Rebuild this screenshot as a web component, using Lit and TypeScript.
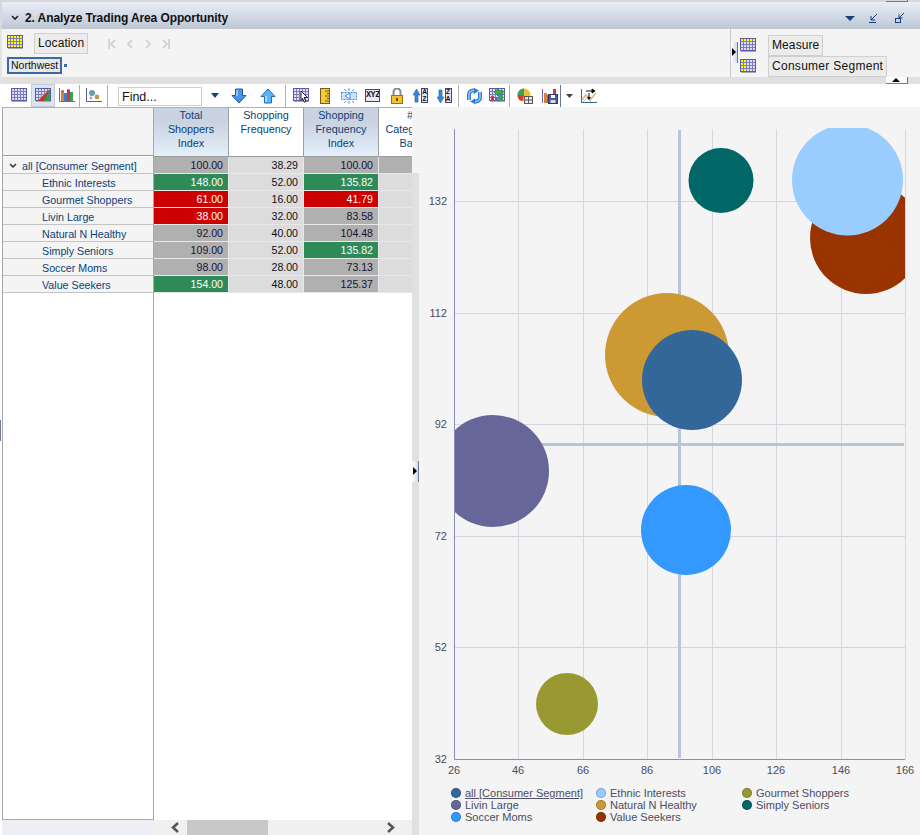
import { LitElement, html, css, svg } from "lit";
import { customElement } from "lit/decorators.js";

const grid = (mode: string) => svg`
  <rect x=".5" y=".5" width="15" height="12" fill="#dedff4" stroke="#5a5aa0"/>
  ${mode === "all" ? svg`<rect x="1" y="1" width="14" height="11" fill="#ffff00"/>` : ""}
  ${mode === "top" ? svg`<rect x="1" y="1" width="14" height="3" fill="#ffff00"/>` : ""}
  ${mode === "left" ? svg`<rect x="1" y="1" width="5" height="11" fill="#ffff00"/>` : ""}
  <path d="M3.500 1v11M6.500 1v11M9.500 1v11M12.500 1v11M1 3.500h14M1 6.500h14M1 9.500h14" stroke="#7c7cbc" fill="none"/>
  <path d="M1 13.500h15" stroke="#aaa"/>`;

const icons: Record<string, unknown> = {
  table: grid("none"),
  tablechart: svg`${grid("none")}<path d="M3 13L15 1v12z" fill="#2e9e4f"/><path d="M3 13L15 1 9 13z" fill="#c8342c"/>`,
  bars: svg`<path d="M.5 0v13.500H16" stroke="#6a6a9a" fill="none"/><rect x="2" y="3" width="3" height="10" fill="#d8803c"/><rect x="5" y="5" width="3" height="8" fill="#4a78c8"/><rect x="8" y="2" width="3" height="11" fill="#c83c3c"/><rect x="11" y="4" width="3" height="9" fill="#3ca05a"/><path d="M2 3h3M8 2h3" stroke="#8a3030"/>`,
  scatter: svg`<path d="M.5 0v13.500H16" stroke="#5a5a9a" fill="none"/><circle cx="6" cy="5" r="3" fill="#6f9aa8"/><circle cx="11" cy="9" r="2.400" fill="#b8a040"/><circle cx="5" cy="10" r="1.400" fill="#9aa8c0"/>`,
  down: svg`<path d="M4.500 1h7v6.500h3.500L8 15 1 7.500h3.500z" fill="#4a94e4" stroke="#1c5ca8"/><path d="M6 2v6" stroke="#a8d0f4" stroke-width="1.500"/>`,
  up: svg`<path d="M4.500 15h7V8.500H15L8 1 1 8.500h3.500z" fill="#5cb4f4" stroke="#1c6cb8"/><path d="M6 14V8" stroke="#c4e4fa" stroke-width="1.500"/>`,
  gridcursor: svg`${grid("none")}<path d="M8 3l6.500 6.500H11l2 4-1.500.8-2-4L8 12z" fill="#fff" stroke="#222"/>`,
  ruler: svg`<rect x="3.500" y=".5" width="9" height="15" fill="#f4c83c" stroke="#7a5a10"/><path d="M8 3h4M10 5.500h2M8 8h4M10 10.500h2M8 13h4" stroke="#7a5a10"/>`,
  swap: svg`<path d="M3 1l2 2M8 0v3M13 1l-2 2M3 15l2-2M8 16v-3M13 15l-2-2" stroke="#5aa0e0"/><rect x=".5" y="4.500" width="15" height="7" fill="#cfe4f8" stroke="#4a88d0" stroke-dasharray="2 1"/><path d="M4 8l5-3v6z" fill="#fff" stroke="#4a88d0"/>`,
  lock: svg`<path d="M4.500 7V4a3.500 3.500 0 0 1 7 0v3" fill="none" stroke="#8a8a8a" stroke-width="2"/><rect x="2.500" y="7.500" width="11" height="8" fill="#f4c030" stroke="#a07010"/><path d="M8 10v3" stroke="#7a4a00" stroke-width="2"/>`,
  refresh: svg`<path d="M3 12V6.500a4 4 0 0 1 4-4h2" fill="none" stroke="#2f7cd0" stroke-width="4"/><path d="M3 12V6.500a4 4 0 0 1 4-4h2" fill="none" stroke="#9ccbf2" stroke-width="1.500"/><path d="M8 0l5 2.500L8 6z" fill="#2f7cd0"/><path d="M14 4v5.500a4 4 0 0 1-4 4H8" fill="none" stroke="#2f7cd0" stroke-width="4"/><path d="M14 4v5.500a4 4 0 0 1-4 4H8" fill="none" stroke="#9ccbf2" stroke-width="1.500"/><path d="M9 10.500L4 13.500 9 16z" fill="#2f7cd0"/>`,
  gridback: svg`${grid("none")}<rect x="2" y="8" width="3" height="5" fill="#c83c3c"/><rect x="6" y="9" width="3" height="4" fill="#4a78c8"/><rect x="10" y="7" width="4" height="6" fill="#3ca05a"/><path d="M5 4l4-3.500V2.500h5V6H9v2z" fill="#2eb84a" stroke="#1a6a2a" stroke-width=".5"/>`,
  pie: svg`<circle cx="7" cy="7" r="6.500" fill="#ecc030"/><path d="M7 7V.5a6.500 6.500 0 0 0-6.500 6.500z" fill="#3ca05a"/><path d="M7 7H.5a6.500 6.500 0 0 0 5 6.300z" fill="#d83c2c"/><rect x="7.500" y="8.500" width="8" height="7" fill="#e8e8e8" stroke="#555"/><path d="M11.500 9v6M8 12h7" stroke="#555"/>`,
  save: svg`<path d="M.5 1v14" stroke="#6a6a9a"/><rect x="2" y="5" width="3" height="10" fill="#d8803c"/><rect x="5" y="7" width="2" height="8" fill="#4a78c8"/><rect x="11" y="1" width="3" height="5" fill="#c83c3c"/><rect x="6.500" y="6.500" width="9" height="9" fill="#4a5a9a" stroke="#2a3a6a"/><rect x="9" y="7" width="4" height="3" fill="#fff"/><rect x="8.500" y="12" width="5" height="3" fill="#d8d8e8"/>`,
  chartswap: svg`<path d="M.5 1v13.500H16" stroke="#2a6a8a" fill="none"/><path d="M1 12l4-5 4 5 6-7" fill="none" stroke="#ecb070" stroke-width="1.500"/><path d="M2 14l4-4 4 4" fill="none" stroke="#a8c8e8"/><path d="M5 3h6M11 1l3 2-3 2zM8 9v-4" stroke="#111" fill="#111"/><path d="M6 9l2 3 2-3z" fill="#111"/>`,
};

const Ic = (name: string) =>
  html`<svg class="ic" width="16" height="16" viewBox="0 0 16 16">${icons[name]}</svg>`;

const sortIcon = (first: string, second: string, dir: string) => html`
  <span class="sort">
    <svg width="7" height="16" viewBox="0 0 7 16">
      ${dir === "up"
        ? svg`<path d="M2 14h3V7h2L3.500 1 0 7h2z" fill="#3a88d8" stroke="#1c5ca8" stroke-width=".6"/>`
        : svg`<path d="M2 2h3v7h2l-3.500 6L0 9h2z" fill="#3a88d8" stroke="#1c5ca8" stroke-width=".6"/>`}
    </svg>
    <span class="sortbox"><span>${first}</span><span>${second}</span></span>
  </span>`;

type Tool = { k: string; w: number; n?: string };
const tools: Tool[] = [
  { k: "ic", n: "table", w: 24 },
  { k: "sel", n: "tablechart", w: 24 },
  { k: "ic", n: "bars", w: 24 },
  { k: "sep", w: 1 },
  { k: "ic", n: "scatter", w: 27 },
  { k: "sep", w: 1 },
  { k: "gap", w: 10 },
  { k: "find", w: 84 },
  { k: "dd", w: 26 },
  { k: "ic", n: "down", w: 22 },
  { k: "ic", n: "up", w: 35 },
  { k: "sep", w: 1 },
  { k: "ic", n: "gridcursor", w: 29 },
  { k: "ic", n: "ruler", w: 19 },
  { k: "ic", n: "swap", w: 29 },
  { k: "xyz", w: 19 },
  { k: "ic", n: "lock", w: 29 },
  { k: "az", w: 19 },
  { k: "za", w: 28 },
  { k: "sep", w: 1 },
  { k: "ic", n: "refresh", w: 29 },
  { k: "ic", n: "gridback", w: 17 },
  { k: "gap", w: 4 },
  { k: "sep", w: 1 },
  { k: "ic", n: "pie", w: 29 },
  { k: "ic", n: "save", w: 21 },
  { k: "sepd", w: 1 },
  { k: "ddg", w: 16 },
  { k: "ic", n: "chartswap", w: 23 },
];

type Tone = "g" | "r" | "n";
const rows: { name: string; a: string; at: Tone; b: string; c: string; ct: Tone }[] = [
  { name: "Ethnic Interests", a: "148.00", at: "g", b: "52.00", c: "135.82", ct: "g" },
  { name: "Gourmet Shoppers", a: "61.00", at: "r", b: "16.00", c: "41.79", ct: "r" },
  { name: "Livin Large", a: "38.00", at: "r", b: "32.00", c: "83.58", ct: "n" },
  { name: "Natural N Healthy", a: "92.00", at: "n", b: "40.00", c: "104.48", ct: "n" },
  { name: "Simply Seniors", a: "109.00", at: "n", b: "52.00", c: "135.82", ct: "g" },
  { name: "Soccer Moms", a: "98.00", at: "n", b: "28.00", c: "73.13", ct: "n" },
  { name: "Value Seekers", a: "154.00", at: "g", b: "48.00", c: "125.37", ct: "n" },
];

const legend = [
  { t: "all [Consumer Segment]", c: "#336699", u: true },
  { t: "Ethnic Interests", c: "#99ccff" },
  { t: "Gourmet Shoppers", c: "#999933" },
  { t: "Livin Large", c: "#666699" },
  { t: "Natural N Healthy", c: "#cc9933" },
  { t: "Simply Seniors", c: "#006666" },
  { t: "Soccer Moms", c: "#3399ff" },
  { t: "Value Seekers", c: "#993300" },
];

const xTicks = [
  [26, 454], [46, 518], [66, 583], [86, 647], [106, 712], [126, 776], [146, 841], [166, 905],
];
const yTicks = [
  [132, 201], [112, 313], [92, 424], [72, 536], [52, 647], [32, 759],
];
const bubbles = [
  { x: 866, y: 238, r: 56, c: "#993300" },
  { x: 847.5, y: 180, r: 55.5, c: "#99ccff" },
  { x: 721, y: 180.5, r: 32.5, c: "#006666" },
  { x: 667, y: 355, r: 62, c: "#cc9933" },
  { x: 692, y: 380, r: 50, c: "#336699" },
  { x: 493, y: 471, r: 56, c: "#666699" },
  { x: 686, y: 530, r: 45, c: "#3399ff" },
  { x: 567, y: 704, r: 31, c: "#999933" },
];

@customElement("app-root")
export class AppRoot extends LitElement {
  static styles = css`
    :host {
      display: block;
      position: relative;
      width: 920px;
      height: 835px;
      overflow: hidden;
      background: #fff;
      font-family: "Liberation Sans", Arial, sans-serif;
      font-size: 11px;
      color: #111;
    }
    .head {
      padding-left: 2px;
      padding-top: 2px;
      background: #d8d8d8;
    }
    .title {
      height: 20px;
      border-bottom: 1px solid #c4c8d0;
      background: linear-gradient(#eaeef6, #bec8d6);
      display: flex;
      align-items: center;
      padding: 6px 15px 0 9px;
      font-weight: bold;
      font-size: 12px;
      color: #111;
      box-sizing: content-box;
    }
    .title .t { margin-left: 6px; flex: 1; letter-spacing: -0.1px; }
    .title svg { display: block; }
    .title .mr { margin-left: 14px; }
    .title .mr2 { margin-left: 17px; }
    .panel {
      margin-left: 2px;
      height: 48px;
      background: #f4f4f4;
      display: flex;
      position: relative;
    }
    .wrap { background: #e4e4e4; }
    .pl { flex: 1; padding: 4px 0 0 5px; }
    .row1 { display: flex; align-items: flex-start; height: 24px; }
    .row1 .gridic { margin-top: 2px; margin-right: 11px; }
    .btn {
      border: 1px solid #cfcfcf;
      background: #ececec;
      font-size: 12px;
      line-height: 19px;
      padding: 0 3px;
      color: #111;
      letter-spacing: 0.1px;
      white-space: nowrap;
    }
    .btn.wide { letter-spacing: 0.28px; }
    .nav { display: flex; gap: 10px; margin: 6px 0 0 20px; }
    .nav svg { display: block; }
    .row2 { display: flex; align-items: center; }
    .nw {
      border: 2px solid #3a6aa4;
      background: #e8e8e8;
      font-size: 10.5px;
      line-height: 13px;
      padding: 0 2px;
      width: 55px;
      box-sizing: border-box;
      white-space: nowrap;
      color: #111;
    }
    .dot { width: 3px; height: 3px; margin-left: 2px; background: #3a6aa4; }
    .pr {
      width: 190px;
      box-sizing: border-box;
      border-left: 1px solid #c8c8c8;
      padding: 6px 0 0 9px;
      position: relative;
      display: flex;
      flex-direction: column;
      gap: 1px;
    }
    .prrow { display: flex; align-items: center; gap: 12px; height: 20px; }
    .prrow svg { display: block; }
    .handle {
      position: absolute;
      width: 6px;
      height: 21px;
      background: linear-gradient(90deg, #fff, #cfdcee);
      border-right: 1px solid #6a7a98;
    }
    .handle::after {
      content: "";
      position: absolute;
      left: 1px;
      top: 6px;
      border-left: 4px solid #000;
      border-top: 4px solid transparent;
      border-bottom: 4px solid transparent;
    }
    .h1 { left: 0; top: 13px; }
    .band { height: 7px; margin-left: 2px; background: #e0e0e0; }
    .tab {
      position: absolute;
      left: 886px;
      top: 77px;
      width: 21px;
      height: 6px;
      background: #fff;
      border-right: 1px solid #6a7a98;
      border-bottom: 1px solid #6a7a98;
    }
    .tab::after {
      content: "";
      position: absolute;
      left: 6px;
      top: 1px;
      border-bottom: 4px solid #000;
      border-left: 4px solid transparent;
      border-right: 4px solid transparent;
    }
    .toptab {
      position: absolute;
      left: 886px;
      top: 0;
      width: 21px;
      height: 1px;
      border-right: 1px solid #6a7a98;
      border-bottom: 1px solid #6a7a98;
    }
    .bar {
      height: 23px;
      display: flex;
      align-items: center;
      padding-left: 7px;
      background: #fff;
    }
    .slot { display: flex; align-items: center; justify-content: center; height: 23px; flex: none; }
    .slot .ic { display: block; }
    .slot.sel {
      background: #dbe5f0;
      box-shadow: inset 0 0 0 1px #c4ccd8;
    }
    .sep { height: 22px; background: #b0b0b0; flex: none; }
    .sepd { height: 22px; background: #6a7a90; flex: none; }
    .find {
      box-sizing: border-box;
      height: 19px;
      margin-top: 2px;
      border: 1px solid #cfcfcf;
      background: #fff;
      font-size: 12.5px;
      line-height: 18px;
      padding-left: 3px;
      flex: none;
    }
    .xyz {
      width: 15px;
      height: 13px;
      box-sizing: border-box;
      border: 1px solid #44447a;
      background: #e8e8f6;
      font: bold 8.5px/11px "Liberation Mono", monospace;
      text-align: center;
      color: #111;
      overflow: hidden;
      letter-spacing: -0.5px;
    }
    .sort { display: flex; align-items: center; gap: 1px; }
    .sort svg { display: block; }
    .sortbox {
      display: flex;
      flex-direction: column;
      width: 7px;
      height: 15px;
      box-sizing: border-box;
      border: 1px solid #44447a;
      background: #dfe0f0;
      font: bold 6.5px/6.5px "Liberation Sans", sans-serif;
      text-align: center;
      color: #111;
    }
    .main { display: flex; height: 728px; position: relative; }
    .tablearea {
      width: 412px;
      padding-left: 2px;
      box-sizing: border-box;
      display: flex;
      flex-direction: column;
    }
    .tgrid { display: flex; height: 713px; }
    .frozen {
      width: 152px;
      flex: none;
      box-sizing: border-box;
      border-left: 1px solid #a8a8a8;
      border-right: 1px solid #a8a8a8;
      border-bottom: 1px solid #a8a8a8;
      background: #fff;
    }
    .cornerhead {
      height: 49px;
      box-sizing: border-box;
      background: #f4f4f4;
      border-top: 1px solid #b0b0b0;
      border-bottom: 1px solid #9c9c9c;
      margin-bottom: 1px;
    }
    .lab {
      height: 17px;
      box-sizing: border-box;
      border-bottom: 1px solid #c4c4c4;
      background: #f4f4f4;
      padding: 2px 0 0 39px;
      color: #0c3f74;
      font-size: 10.7px;
      white-space: nowrap;
      display: flex;
      align-items: center;
    }
    .lab.top { padding-left: 5px; }
    .lab.top svg { margin-right: 4px; display: block; flex: none; }
    .datacols { flex: 1; overflow: hidden; }
    .dhead { display: flex; height: 50px; width: 300px; }
    .hc {
      width: 75px;
      box-sizing: border-box;
      flex: none;
      height: 50px;
      border-top: 1px solid #b0b0b0;
      border-right: 1px solid #a0a0a0;
      border-bottom: 1px solid #9c9c9c;
      background: #fff;
      text-align: center;
      line-height: 14px;
      color: #0c3f74;
      font-size: 10.8px;
      white-space: nowrap;
    }
    .hc.blue { background: linear-gradient(#cad3e2 30%, #e4f0fb); }
    .drow { display: flex; height: 17px; width: 300px; }
    .v {
      width: 75px;
      height: 17px;
      flex: none;
      box-sizing: border-box;
      border-right: 1px solid #e8e8e8;
      border-bottom: 1px solid #e8e8e8;
      text-align: right;
      padding-right: 5px;
      line-height: 16px;
      font-size: 10.6px;
    }
    .v.n { background: #b0b0b0; color: #1a1030; }
    .v.l { background: #dcdcdc; color: #111; }
    .v.g { background: #2e8b57; color: #fff; }
    .v.r { background: #cc0000; color: #fff; }
    .scroll { display: flex; height: 15px; }
    .sf { width: 152px; flex: none; background: #eeeff5; }
    .st { flex: 1; background: #f0f0f0; display: flex; align-items: center; padding: 0 16px; }
    .st svg { display: block; flex: none; }
    .thumb { width: 81px; height: 15px; background: #c8c8c8; margin-left: 7px; }
    .sg { flex: 1; }
    .split { width: 7px; flex: none; display: flex; flex-direction: column; }
    .split i { display: block; height: 66px; background: #f4f4f4; }
    .split b { display: block; flex: 1; background: #e0e0e0; }
    .h2 { left: 412px; top: 354px; }
    .edge { position: absolute; left: 0; top: 313px; width: 1px; height: 21px; background: #6a7a98; }
    .chart {
      flex: 1;
      background: #f4f4f4;
      display: flex;
      flex-direction: column;
    }
    .chart svg { display: block; }
    .plot text {
      font-family: "Liberation Sans", sans-serif;
      font-size: 11px;
      fill: #4c4c5e;
    }
    .legend {
      display: grid;
      grid-template-columns: 145px 146px 160px;
      grid-auto-rows: 12px;
      padding-left: 32px;
      font-size: 11px;
      line-height: 12px;
      color: #4c4c62;
    }
    .li { display: flex; align-items: center; gap: 4px; white-space: nowrap; }
    .li u { text-decoration: underline; }
    .sw { width: 10px; height: 10px; border-radius: 50%; flex: none; box-shadow: inset 0 0 0 1px rgba(0,0,0,.2); }
  `;

  render() {
    const tri = (d: string, f: string) => html`<svg width="8" height="10" viewBox="0 0 8 10"><path d=${d} fill="none" stroke=${f} stroke-width="2"/></svg>`;
    return html`
      <div class="head">
        <div class="title">
          <svg width="8" height="6" viewBox="0 0 8 6"><path d="M1 1l3 3 3-3" fill="none" stroke="#222" stroke-width="1.600"/></svg>
          <span class="t">2. Analyze Trading Area Opportunity</span>
          <svg width="10" height="5" viewBox="0 0 10 5"><path d="M0 0h10L5 5z" fill="#1c3f80"/></svg>
          <svg class="mr" width="9" height="10" viewBox="0 0 9 10"><path d="M8 1L2 7M2 3v4h4M0 9.500h7" fill="none" stroke="#1c3f80"/></svg>
          <svg class="mr2" width="10" height="10" viewBox="0 0 10 10"><path d="M9 0L4 5M4 1.500V5h3.500" fill="none" stroke="#1c3f80"/><rect x=".5" y="5.500" width="5" height="4" fill="none" stroke="#1c3f80"/></svg>
        </div>
      </div>
      <div class="wrap">
        <div class="panel">
          <div class="pl">
            <div class="row1">
              <svg class="gridic" width="16" height="14" viewBox="0 0 16 14">${grid("all")}</svg>
              <span class="btn">Location</span>
              <div class="nav">
                ${tri("M1 0v10M7 1L3 5l4 4", "#d4d4d4")}
                ${tri("M6 1L2 5l4 4", "#d4d4d4")}
                ${tri("M2 1l4 4-4 4", "#d4d4d4")}
                ${tri("M7 0v10M1 1l4 4-4 4", "#d4d4d4")}
              </div>
            </div>
            <div class="row2"><span class="nw">Northwest</span><span class="dot"></span></div>
          </div>
          <div class="pr">
            <div class="handle h1"></div>
            <div class="prrow"><svg width="16" height="14" viewBox="0 0 16 14">${grid("top")}</svg><span class="btn">Measure</span></div>
            <div class="prrow"><svg width="16" height="14" viewBox="0 0 16 14">${grid("left")}</svg><span class="btn wide">Consumer Segment</span></div>
          </div>
        </div>
        <div class="band"></div>
      </div>
      <div class="toptab"></div>
      <div class="tab"></div>
      <div class="bar">
        ${tools.map((t) => this.tool(t))}
      </div>
      <div class="main">
        <div class="edge"></div>
        <div class="tablearea">
          <div class="tgrid">
            <div class="frozen">
              <div class="cornerhead"></div>
              <div class="lab top">
                <svg width="10" height="6" viewBox="0 0 10 6"><path d="M2 1l3 3 3-3" fill="none" stroke="#333" stroke-width="1.500"/></svg>
                all [Consumer Segment]
              </div>
              ${rows.map((r) => html`<div class="lab">${r.name}</div>`)}
            </div>
            <div class="datacols">
              <div class="dhead">
                <div class="hc blue">Total<br />Shoppers<br />Index</div>
                <div class="hc">Shopping<br />Frequency</div>
                <div class="hc blue">Shopping<br />Frequency<br />Index</div>
                <div class="hc"># of<br />Category in&nbsp;&nbsp;<br />Basket</div>
              </div>
              <div class="drow">
                <div class="v n">100.00</div>
                <div class="v l">38.29</div>
                <div class="v n">100.00</div>
                <div class="v n"></div>
              </div>
              ${rows.map(
                (r) => html`<div class="drow">
                  <div class="v ${r.at}">${r.a}</div>
                  <div class="v l">${r.b}</div>
                  <div class="v ${r.ct}">${r.c}</div>
                  <div class="v l"></div>
                </div>`
              )}
            </div>
          </div>
          <div class="scroll">
            <div class="sf"></div>
            <div class="st">
              <svg width="10" height="11" viewBox="0 0 10 11"><path d="M8 1L3 5.500 8 10" fill="none" stroke="#555" stroke-width="2.500"/></svg>
              <div class="thumb"></div>
              <div class="sg"></div>
              <svg width="10" height="11" viewBox="0 0 10 11"><path d="M2 1l5 4.500L2 10" fill="none" stroke="#555" stroke-width="2.500"/></svg>
            </div>
          </div>
        </div>
        <div class="split"><i></i><b></b></div>
        <div class="handle h2"></div>
        <div class="chart">
          <svg class="plot" width="501" height="680" viewBox="419 107 501 680">
            <defs><clipPath id="pc"><rect x="454" y="128" width="451" height="631"></rect></clipPath></defs>
            ${xTicks.slice(1).map(([, x]) => svg`<line x1=${x + 0.5} x2=${x + 0.5} y1="129" y2="759" stroke="#d6d6e2"></line>`)}
            ${yTicks.slice(0, 5).map(([, y]) => svg`<line x1="454" x2="905" y1=${y + 0.5} y2=${y + 0.5} stroke="#d6d6e2"></line>`)}
            <rect x="678" y="130" width="3" height="628" fill="#b8c4d8"></rect>
            <rect x="455" y="443" width="449" height="3" fill="#b8c4d8"></rect>
            <g clip-path="url(#pc)">
              ${bubbles.map((b) => svg`<circle cx=${b.x} cy=${b.y} r=${b.r} fill=${b.c}></circle>`)}
            </g>
            <path d="M454.500 129V759.500H905" fill="none" stroke="#8a8ab4"></path>
            ${xTicks.map(([v, x]) => svg`<text x=${x} y="774" text-anchor="middle">${v}</text>`)}
            ${yTicks.map(([v, y]) => svg`<text x="447" y=${y + 4} text-anchor="end">${v}</text>`)}
          </svg>
          <div class="legend">
            ${legend.map(
              (l) => html`<div class="li">
                <span class="sw" style="background:${l.c}"></span>
                ${l.u ? html`<u>${l.t}</u>` : html`<span>${l.t}</span>`}
              </div>`
            )}
          </div>
        </div>
      </div>
    `;
  }

  tool(t: Tool) {
    const w = `width:${t.w}px`;
    switch (t.k) {
      case "sep":
        return html`<div class="sep" style=${w}></div>`;
      case "sepd":
        return html`<div class="sepd" style=${w}></div>`;
      case "gap":
        return html`<div class="slot" style=${w}></div>`;
      case "find":
        return html`<div class="find" style=${w}>Find...</div>`;
      case "dd":
        return html`<div class="slot" style=${w}><svg width="8" height="5" viewBox="0 0 8 5"><path d="M0 0h8L4 5z" fill="#1c3f80"/></svg></div>`;
      case "ddg":
        return html`<div class="slot" style=${w}><svg width="7" height="4" viewBox="0 0 7 4"><path d="M0 0h7L3.500 4z" fill="#444"/></svg></div>`;
      case "xyz":
        return html`<div class="slot" style=${w}><div class="xyz">XYZ</div></div>`;
      case "az":
        return html`<div class="slot" style=${w}>${sortIcon("A", "Z", "up")}</div>`;
      case "za":
        return html`<div class="slot" style=${w}>${sortIcon("Z", "A", "down")}</div>`;
      case "sel":
        return html`<div class="slot sel" style=${w}>${Ic(t.n!)}</div>`;
      default:
        return html`<div class="slot" style=${w}>${Ic(t.n!)}</div>`;
    }
  }
}
